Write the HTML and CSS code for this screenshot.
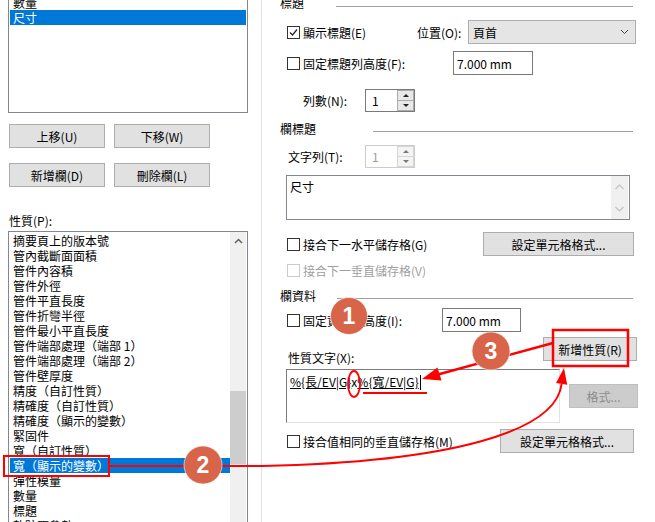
FILE: index.html
```html
<!DOCTYPE html>
<html>

<head>
  <meta charset="utf-8">
  <title>欄屬性</title>
  <link rel="stylesheet" href="styles.css">
</head>

<body>
  <div class="dialog">
    <div class="left-pane">
      <div class="listbox columns-list">
        <div class="item">數量</div>
        <div class="item selected">尺寸</div>
      </div>

      <div class="button-row">
        <div class="button">上移(U)</div>
        <div class="button">下移(W)</div>
      </div>
      <div class="button-row second">
        <div class="button">新增欄(D)</div>
        <div class="button">刪除欄(L)</div>
      </div>

      <div class="field-label">性質(P):</div>
      <div class="listbox props-list">
        <div class="items">
          <div class="item">摘要頁上的版本號</div>
          <div class="item">管內截斷面面積</div>
          <div class="item">管件內容積</div>
          <div class="item">管件外徑</div>
          <div class="item">管件平直長度</div>
          <div class="item">管件折彎半徑</div>
          <div class="item">管件最小平直長度</div>
          <div class="item">管件端部處理<span class="paren">（</span>端部 1<span class="paren">）</span></div>
          <div class="item">管件端部處理<span class="paren">（</span>端部 2<span class="paren">）</span></div>
          <div class="item">管件壁厚度</div>
          <div class="item">精度<span class="paren">（</span>自訂性質<span class="paren">）</span></div>
          <div class="item">精確度<span class="paren">（</span>自訂性質<span class="paren">）</span></div>
          <div class="item">精確度<span class="paren">（</span>顯示的變數<span class="paren">）</span></div>
          <div class="item">緊固件</div>
          <div class="item">寬<span class="paren">（</span>自訂性質<span class="paren">）</span></div>
          <div class="item selected">寬<span class="paren">（</span>顯示的變數<span class="paren">）</span></div>
          <div class="item">彈性模量</div>
          <div class="item">數量</div>
          <div class="item">標題</div>
          <div class="item">軌跡距參數</div>
        </div>
        <div class="scrollbar">
          <div class="scroll-arrow">
            <svg width="9" height="6" viewBox="0 0 9 6"><polyline points="1,5 4.5,1.5 8,5" fill="none" stroke="#606060" stroke-width="1.5"/></svg>
          </div>
          <div class="thumb"></div>
        </div>
      </div>
    </div>

    <div class="right-pane">
      <div class="group-title first">
        <span>標題</span>
        <div class="rule"></div>
      </div>

      <div class="row">
        <div class="check-field w-pos">
          <div class="check checked">
            <svg width="11" height="11" viewBox="0 0 11 11"><polyline points="2,5.5 4.5,8 9,2.5" fill="none" stroke="#222" stroke-width="1.2"/></svg>
          </div>
          <span>顯示標題(E)</span>
        </div>
        <div class="pos-label">位置(O):</div>
        <div class="select">
          <span>頁首</span>
          <svg width="9" height="6" viewBox="0 0 9 6"><polyline points="1,1 4.5,4.5 8,1" fill="none" stroke="#444" stroke-width="1"/></svg>
        </div>
      </div>

      <div class="row row-b">
        <div class="check-field w-title-height">
          <div class="check"></div>
          <span>固定標題列高度(F):</span>
        </div>
        <div class="textbox w-80">7.000 mm</div>
      </div>

      <div class="row row-c">
        <div class="row-label count-label">列數(N):</div>
        <div class="spinner">
          <div class="spin-value">1</div>
          <div class="spin-buttons">
            <div class="spin-up"><i></i></div>
            <div class="spin-down"><i></i></div>
          </div>
        </div>
      </div>

      <div class="group-title second">
        <span>欄標題</span>
        <div class="rule"></div>
      </div>

      <div class="row row-d">
        <div class="row-label text-row-label">文字列(T):</div>
        <div class="spinner disabled">
          <div class="spin-value">1</div>
          <div class="spin-buttons">
            <div class="spin-up"><i></i></div>
            <div class="spin-down"><i></i></div>
          </div>
        </div>
      </div>

      <div class="textarea header-text">
        <div class="textarea-body">尺寸</div>
        <div class="textarea-scroll">
          <svg width="11" height="7" viewBox="0 0 11 7"><polyline points="1.5,6 5.5,2 9.5,6" fill="none" stroke="#c2c2c2" stroke-width="1.2"/></svg>
          <svg width="11" height="7" viewBox="0 0 11 7"><polyline points="1.5,1 5.5,5 9.5,1" fill="none" stroke="#c2c2c2" stroke-width="1.2"/></svg>
        </div>
      </div>

      <div class="row row-e">
        <div class="check-field w-merge-h">
          <div class="check"></div>
          <span>接合下一水平儲存格(G)</span>
        </div>
        <div class="button w-151">設定單元格格式...</div>
      </div>

      <div class="row row-f">
        <div class="check-field disabled">
          <div class="check"></div>
          <span>接合下一垂直儲存格(V)</span>
        </div>
      </div>

      <div class="group-title third">
        <span>欄資料</span>
        <div class="rule"></div>
      </div>

      <div class="row row-g">
        <div class="check-field w-data-height">
          <div class="check"></div>
          <span>固定資料列高度(I):</span>
        </div>
        <div class="textbox w-79">7.000 mm</div>
      </div>

      <div class="row row-h">
        <div class="row-label prop-text-label">性質文字(X):</div>
        <div class="button w-94">新增性質(R)</div>
      </div>

      <div class="row row-i">
        <div class="textarea prop-text">
          <span class="field">%{長/EV|G}</span>x<span class="field">%{寬/EV|G}</span><span class="caret"></span>
        </div>
        <div class="button w-69 disabled">格式...</div>
      </div>

      <div class="row row-j">
        <div class="check-field w-merge-same">
          <div class="check"></div>
          <span>接合值相同的垂直儲存格(M)</span>
        </div>
        <div class="button w-134">設定單元格格式...</div>
      </div>
    </div>
  </div>

  <!-- callouts drawn over the dialog -->
  <svg class="annotations" width="655" height="522" viewBox="0 0 655 522">
    <rect x="4" y="456" width="105" height="20" fill="none" stroke="#ff0000" stroke-width="2"/>
    <path d="M110 466 L262 466 C450 462 556 432 561.6 384" fill="none" stroke="#ff0000" stroke-width="2"/>
    <polygon points="564,368 567.2,384.8 556,383" fill="#ff0000"/>

    <rect x="553" y="330" width="75" height="36" fill="none" stroke="#ff0000" stroke-width="2.5"/>
    <line x1="553" y1="343" x2="438" y2="374.5" stroke="#ff0000" stroke-width="2.5"/>
    <polygon points="422,379 441.5,380.5 437.5,367.5" fill="#ff0000"/>

    <ellipse cx="354" cy="384" rx="6" ry="13" fill="none" stroke="#ff0000" stroke-width="1.8"/>
    <line x1="363" y1="393" x2="427" y2="393" stroke="#ff0000" stroke-width="2"/>

    <g class="badge">
      <circle cx="349" cy="316" r="18.5"/>
      <text x="349" y="324">1</text>
    </g>
    <g class="badge">
      <circle cx="203" cy="465" r="19"/>
      <text x="203" y="473">2</text>
    </g>
    <g class="badge">
      <circle cx="491" cy="351" r="19"/>
      <text x="491" y="359">3</text>
    </g>
  </svg>
</body>

</html>
```

FILE: styles.css
```css
body {
  margin: 0;
  width: 655px;
  height: 522px;
  overflow: hidden;
  position: relative;
  background: #ffffff;
  color: #000000;
  font-family: "Noto Sans CJK TC", "Noto Sans", sans-serif;
  font-size: 12px;
  line-height: 15px;
}
.dialog {
  display: flex;
  height: 522px;
}

/* left side: column list + property list */
.left-pane {
  flex-shrink: 0;
  width: 262px;
  box-sizing: border-box;
  padding-left: 8px;
  border-right: 1px solid #e3e3e3;
}
.listbox {
  width: 240px;
  box-sizing: border-box;
  border: 1px solid #828790;
  background: #ffffff;
}
.columns-list {
  margin-top: -6px;
  height: 119px;
  padding: 0 1px;
}
.item {
  height: 15px;
  padding-left: 3px;
  white-space: nowrap;
}
/* full-width brackets, centred in their cell */
.paren {
  display: inline-block;
  width: 12px;
  text-align: center;
}
.item.selected {
  background: #0078d7;
  color: #ffffff;
}
.button-row {
  display: flex;
  gap: 9px;
  margin: 11px 0 0 1px;
}
.button-row.second {
  margin-top: 15px;
}
.button {
  flex-shrink: 0;
  display: flex;
  align-items: center;
  justify-content: center;
  box-sizing: border-box;
  width: 96px;
  height: 24px;
  background: #e1e1e1;
  border: 1px solid #adadad;
}
.button.disabled {
  background: #cccccc;
  border-color: #bfbfbf;
  color: #8d8d8d;
}
.field-label {
  height: 15px;
  margin: 26px 0 0 1px;
}
.props-list {
  display: flex;
  height: 300px;
  margin-top: 3px;
  padding: 1px 0 0 1px;
}
.props-list .items {
  width: 220px;
  flex-shrink: 0;
}
.scrollbar {
  width: 16px;
  margin-top: -1px;
  background: #f0f0f0;
}
.scroll-arrow {
  display: flex;
  justify-content: center;
  align-items: center;
  height: 17px;
}
.thumb {
  height: 73px;
  margin-top: 142px;
  background: #cdcdcd;
}

/* right side: header / column header / data groups */
.right-pane {
  flex: 1;
}
.group-title {
  display: flex;
  align-items: flex-start;
  width: 353px;
  height: 15px;
  margin: 9px 0 0 18px;
}
.group-title .rule {
  flex: 1;
  height: 1px;
  margin-top: 10px;
  background: #a0a0a0;
}
.group-title.first {
  margin-top: -5px;
}
.group-title.first .rule {
  margin-left: 32px;
  margin-top: 11px;
}
.group-title.second .rule {
  margin-left: 57px;
}
.group-title.third {
  margin-top: 10px;
}
.group-title.third .rule {
  margin-left: 21px;
}
.row {
  display: flex;
  align-items: center;
  height: 24px;
  margin-top: 10px;
}
.check-field {
  flex-shrink: 0;
  display: flex;
  align-items: center;
  margin-left: 25px;
  white-space: nowrap;
}
.check {
  display: flex;
  align-items: center;
  justify-content: center;
  width: 13px;
  height: 13px;
  box-sizing: border-box;
  margin-right: 3px;
  border: 1px solid #333333;
  background: #ffffff;
}
.check-field.disabled {
  color: #a0a0a0;
}
.check-field.disabled .check {
  border-color: #cccccc;
}
.w-pos { width: 130px; }
.w-title-height { width: 166px; }
.w-merge-h { width: 196px; }
.w-data-height { width: 155px; }
.w-merge-same { width: 213px; }
.w-151 { width: 151px; }
.w-94 { width: 94px; }
.w-69 { width: 69px; }
.w-134 { width: 134px; }
.pos-label {
  width: 51px;
}
.select {
  display: flex;
  align-items: center;
  justify-content: space-between;
  box-sizing: border-box;
  width: 168px;
  height: 24px;
  padding: 0 6px 0 4px;
  background: #e5e5e5;
  border: 1px solid #adadad;
}
.textbox {
  display: flex;
  align-items: center;
  box-sizing: border-box;
  height: 24px;
  padding-left: 3px;
  border: 1px solid #7a7a7a;
  background: #ffffff;
}
.w-80 { width: 80px; }
.w-79 { width: 79px; }
.row-b { margin-top: 7px; }
.row-c { margin-top: 14px; height: 23px; }
.row-label {
  flex-shrink: 0;
}
.count-label {
  width: 62px;
  margin-left: 41px;
}
.text-row-label {
  width: 77px;
  margin-left: 26px;
}
.spinner {
  display: flex;
  box-sizing: border-box;
  width: 50px;
  height: 23px;
  border: 1px solid #7a7a7a;
}
.spin-value {
  flex: 1;
  padding: 3px 0 0 6px;
}
.spin-buttons {
  display: flex;
  flex-direction: column;
  width: 17px;
}
.spin-up,
.spin-down {
  flex: 1;
  display: flex;
  align-items: center;
  justify-content: center;
  box-sizing: border-box;
  background: #e8e8e8;
  border: 1px solid #acacac;
}
.spin-down {
  border-top: none;
}
.spin-up i,
.spin-down i {
  width: 0;
  height: 0;
  border-left: 3px solid transparent;
  border-right: 3px solid transparent;
}
.spin-up i { border-bottom: 3px solid #222; }
.spin-down i { border-top: 3px solid #222; }
.spinner.disabled {
  border-color: #cccccc;
  color: #a0a0a0;
}
.spinner.disabled .spin-up,
.spinner.disabled .spin-down {
  background: #f4f4f4;
  border-color: #d6d6d6;
}
.spinner.disabled .spin-up i { border-bottom-color: #777; }
.spinner.disabled .spin-down i { border-top-color: #777; }
.row-d { margin-top: 9px; height: 23px; }

.textarea {
  flex-shrink: 0;
  box-sizing: border-box;
  margin-left: 24px;
  background: #ffffff;
}
.header-text {
  display: flex;
  width: 344px;
  height: 45px;
  margin-top: 7px;
  border: 1px solid #828790;
}
.textarea-body {
  flex: 1;
  padding: 3px 0 0 3px;
}
.textarea-scroll {
  display: flex;
  flex-direction: column;
  justify-content: space-between;
  align-items: center;
  width: 17px;
  margin-right: 1px;
  padding: 7px 0 6px;
  box-sizing: border-box;
  background: #f0f0f0;
}
.row-e { margin-top: 12px; }
.row-f { margin-top: 7px; height: 15px; }
.row-g { margin-top: 5px; }
.row-h {
  align-items: flex-start;
  height: 28px;
  margin-top: 5px;
}
.prop-text-label {
  align-self: flex-end;
  width: 255px;
  margin-left: 26px;
}
.row-i {
  align-items: flex-start;
  height: 54px;
  margin-top: 4px;
}
.prop-text {
  width: 274px;
  height: 54px;
  padding: 4px 0 0 3px;
  border: 1px solid;
  border-color: #7a7a7a #e3e3e3 #e3e3e3 #7a7a7a;
  white-space: nowrap;
}
.field {
  text-decoration: underline;
}
.caret {
  display: inline-block;
  width: 1px;
  height: 15px;
  margin-left: 1px;
  vertical-align: -3px;
  background: #000000;
}
.row-i .button {
  margin: 15px 0 0 9px;
}
.row-j { margin-top: 6px; }

/* callouts */
.annotations {
  position: absolute;
  top: 0;
  left: 0;
  pointer-events: none;
}
.badge circle {
  fill: #d8644a;
  stroke: rgba(255, 255, 255, 0.6);
  stroke-width: 1;
}
.badge text {
  fill: #ffffff;
  font-family: "Liberation Sans", sans-serif;
  font-weight: bold;
  font-size: 23px;
  text-anchor: middle;
}
```
